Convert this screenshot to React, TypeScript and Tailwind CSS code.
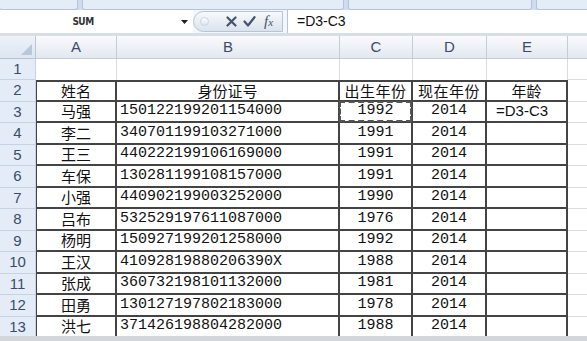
import React from "react";

type Row = { name: string; id: string; born: string; now: string; age?: string };

const data: Row[] = [
  { name: "马强", id: "150122199201154000", born: "1992", now: "2014", age: "=D3-C3" },
  { name: "李二", id: "340701199103271000", born: "1991", now: "2014" },
  { name: "王三", id: "440222199106169000", born: "1991", now: "2014" },
  { name: "车保", id: "130281199108157000", born: "1991", now: "2014" },
  { name: "小强", id: "440902199003252000", born: "1990", now: "2014" },
  { name: "吕布", id: "532529197611087000", born: "1976", now: "2014" },
  { name: "杨明", id: "150927199201258000", born: "1992", now: "2014" },
  { name: "王汉", id: "41092819880206390X", born: "1988", now: "2014" },
  { name: "张成", id: "360732198101132000", born: "1981", now: "2014" },
  { name: "田勇", id: "130127197802183000", born: "1978", now: "2014" },
  { name: "洪七", id: "371426198804282000", born: "1988", now: "2014" },
];

const cjk = "font-['Noto_Sans_CJK_SC',sans-serif] text-[15px]";
const mono = "font-['Liberation_Mono',monospace] text-[15px]";
const thick = "border-r-2 border-b-2 border-[#444]";

function TopStrip() {
  return (
    <div className="h-[10px] flex gap-[4px] bg-[#cfdcee]">
      <div className="w-[78px] rounded-b-[3px] bg-[#e4ecf7] border-b border-r border-[#b4c5db]" />
      <div className="w-[262px] rounded-b-[3px] bg-[#e4ecf7] border-b border-x border-[#b4c5db]" />
      <div className="w-[184px] rounded-b-[3px] bg-[#e4ecf7] border-b border-x border-[#b4c5db]" />
      <div className="flex-1 rounded-bl-[3px] bg-[#e4ecf7] border-b border-l border-[#b4c5db]" />
    </div>
  );
}

function FormulaBar() {
  return (
    <div className="h-[23px] flex items-stretch bg-[#f3f6fa]">
      <div className="w-[176px] flex items-center justify-center pr-[10px] bg-white">
        <span className="font-['DejaVu_Sans_Condensed',sans-serif] text-[10px] font-bold text-[#333] tracking-[-0.5px]">SUM</span>
      </div>
      <div className="w-[17px] flex items-center justify-center bg-white">
        <svg width="7" height="4" viewBox="0 0 7 4">
          <path d="M0 0h7L3.5 4z" fill="#222" />
        </svg>
      </div>
      <div className="w-[90px] my-[1px] flex items-center rounded-l-full border border-[#b7c4d6] bg-gradient-to-b from-[#f7f9fc] to-[#dbe3ee]">
        <div className="ml-[6px] w-[9px] h-[9px] rounded-full border border-[#c9d4e2] bg-gradient-to-b from-white to-[#dbe4f0]" />
        <svg className="ml-[17px]" width="11" height="11" viewBox="0 0 11 11">
          <path d="M1.5 1.5l8 8M9.5 1.5l-8 8" stroke="#44536e" strokeWidth="2.2" strokeLinecap="round" />
        </svg>
        <svg className="ml-[6px]" width="13" height="11" viewBox="0 0 13 11">
          <path d="M1.5 5.5l3.5 4L11.5 1.2" stroke="#44536e" strokeWidth="2.2" fill="none" strokeLinecap="round" strokeLinejoin="round" />
        </svg>
        <span className="ml-[8px] font-['Liberation_Serif',serif] italic text-[15px] leading-none text-[#44536e]">
          f<span className="text-[11px]">x</span>
        </span>
      </div>
      <div className="w-[4px]" />
      <div className="flex-1 flex items-center pl-[9px] bg-white border-l border-[#b7c4d6]">
        <span className="font-['Liberation_Sans',sans-serif] text-[14px] text-[#111]">=D3-C3</span>
      </div>
    </div>
  );
}

function RowHead({ n, h }: { n: number; h: string }) {
  return (
    <div className={`${h} flex items-center justify-center bg-[#e4ecf7] border-b border-r border-[#c5d3e5] font-['Liberation_Sans',sans-serif] text-[15px] text-[#3b4c68]`}>
      {n}
    </div>
  );
}

function Sheet() {
  const heads = ["A", "B", "C", "D", "E"];
  return (
    <div className="flex-1 overflow-hidden">
      <div className="grid grid-cols-[36px_81px_223px_73px_74px_81px_1fr]">
        {/* column headers */}
        <div className="h-[23px] flex items-end justify-end pr-[3px] pb-[3px] bg-gradient-to-b from-[#eef2f8] to-[#dce5f1] border-r border-b border-[#b8c6d9]">
          <svg width="11" height="11" viewBox="0 0 11 11">
            <path d="M11 0v11H0z" fill="#b9c7da" />
          </svg>
        </div>
        {heads.map((c) => (
          <div
            key={c}
            className="h-[23px] flex items-center justify-center bg-gradient-to-b from-[#f9fafc] to-[#e3e8f0] border-r border-b border-[#c3ccd9] font-['Liberation_Sans',sans-serif] text-[15px] text-[#3b4c68]"
          >
            {c}
          </div>
        ))}
        <div className="h-[23px] bg-gradient-to-b from-[#f9fafc] to-[#e3e8f0] border-b border-[#c3ccd9]" />

        {/* row 1 */}
        <RowHead n={1} h="h-[21px]" />
        {heads.map((c) => (
          <div key={c} className="h-[21px] border-r border-[#dcdcdc]" />
        ))}
        <div className="h-[21px] border-b border-[#dcdcdc]" />

        {/* row 2 */}
        <RowHead n={2} h="h-[22px]" />
        <div className={`h-[22px] border-t-2 border-l ${thick} flex items-center justify-center ${cjk} text-[#111]`}>姓名</div>
        <div className={`h-[22px] border-t-2 ${thick} flex items-center justify-center ${cjk} text-[#111]`}>身份证号</div>
        <div className={`h-[22px] border-t-2 ${thick} flex items-center justify-center ${cjk} text-[#111] tracking-[0.5px]`}>出生年份</div>
        <div className={`h-[22px] border-t-2 ${thick} flex items-center justify-center ${cjk} text-[#111] tracking-[0.5px]`}>现在年份</div>
        <div className={`h-[22px] border-t-2 ${thick} flex items-center justify-center ${cjk} text-[#111]`}>年龄</div>
        <div className="h-[22px] border-b border-[#dcdcdc]" />

        {data.map((r, i) => {
          const h = i % 2 === 0 ? "h-[21px]" : "h-[22px]";
          return (
            <React.Fragment key={r.id}>
              <RowHead n={i + 3} h={h} />
              <div className={`${h} border-l ${thick} flex items-center justify-center ${cjk} text-[#111]`}>{r.name}</div>
              <div className={`${h} ${thick} flex items-center pl-[3px] ${mono} text-[#111]`}>{r.id}</div>
              <div className={`${h} ${thick} relative flex items-center justify-center ${mono} text-[#111]`}>
                {r.born}
                {i === 0 && (
                  <div className="absolute -left-[1px] -top-[1px] -right-[1px] -bottom-[1px] border-2 border-dashed border-[#555]" />
                )}
              </div>
              <div className={`${h} ${thick} flex items-center justify-center ${mono} text-[#111]`}>{r.now}</div>
              <div className={`${h} ${thick} flex items-center pl-[9px] font-['Liberation_Sans',sans-serif] text-[15px] text-[#111]`}>
                {r.age}
              </div>
              <div className={`${h} border-b border-[#dcdcdc]`} />
            </React.Fragment>
          );
        })}
      </div>
    </div>
  );
}

export default function App() {
  return (
    <div className="w-[587px] h-[341px] overflow-hidden flex flex-col bg-white">
      <TopStrip />
      <FormulaBar />
      <div className="h-[3px] bg-[#d8dee7]" />
      <Sheet />
      <div className="h-[5px] bg-[#d3d6da]" />
    </div>
  );
}
